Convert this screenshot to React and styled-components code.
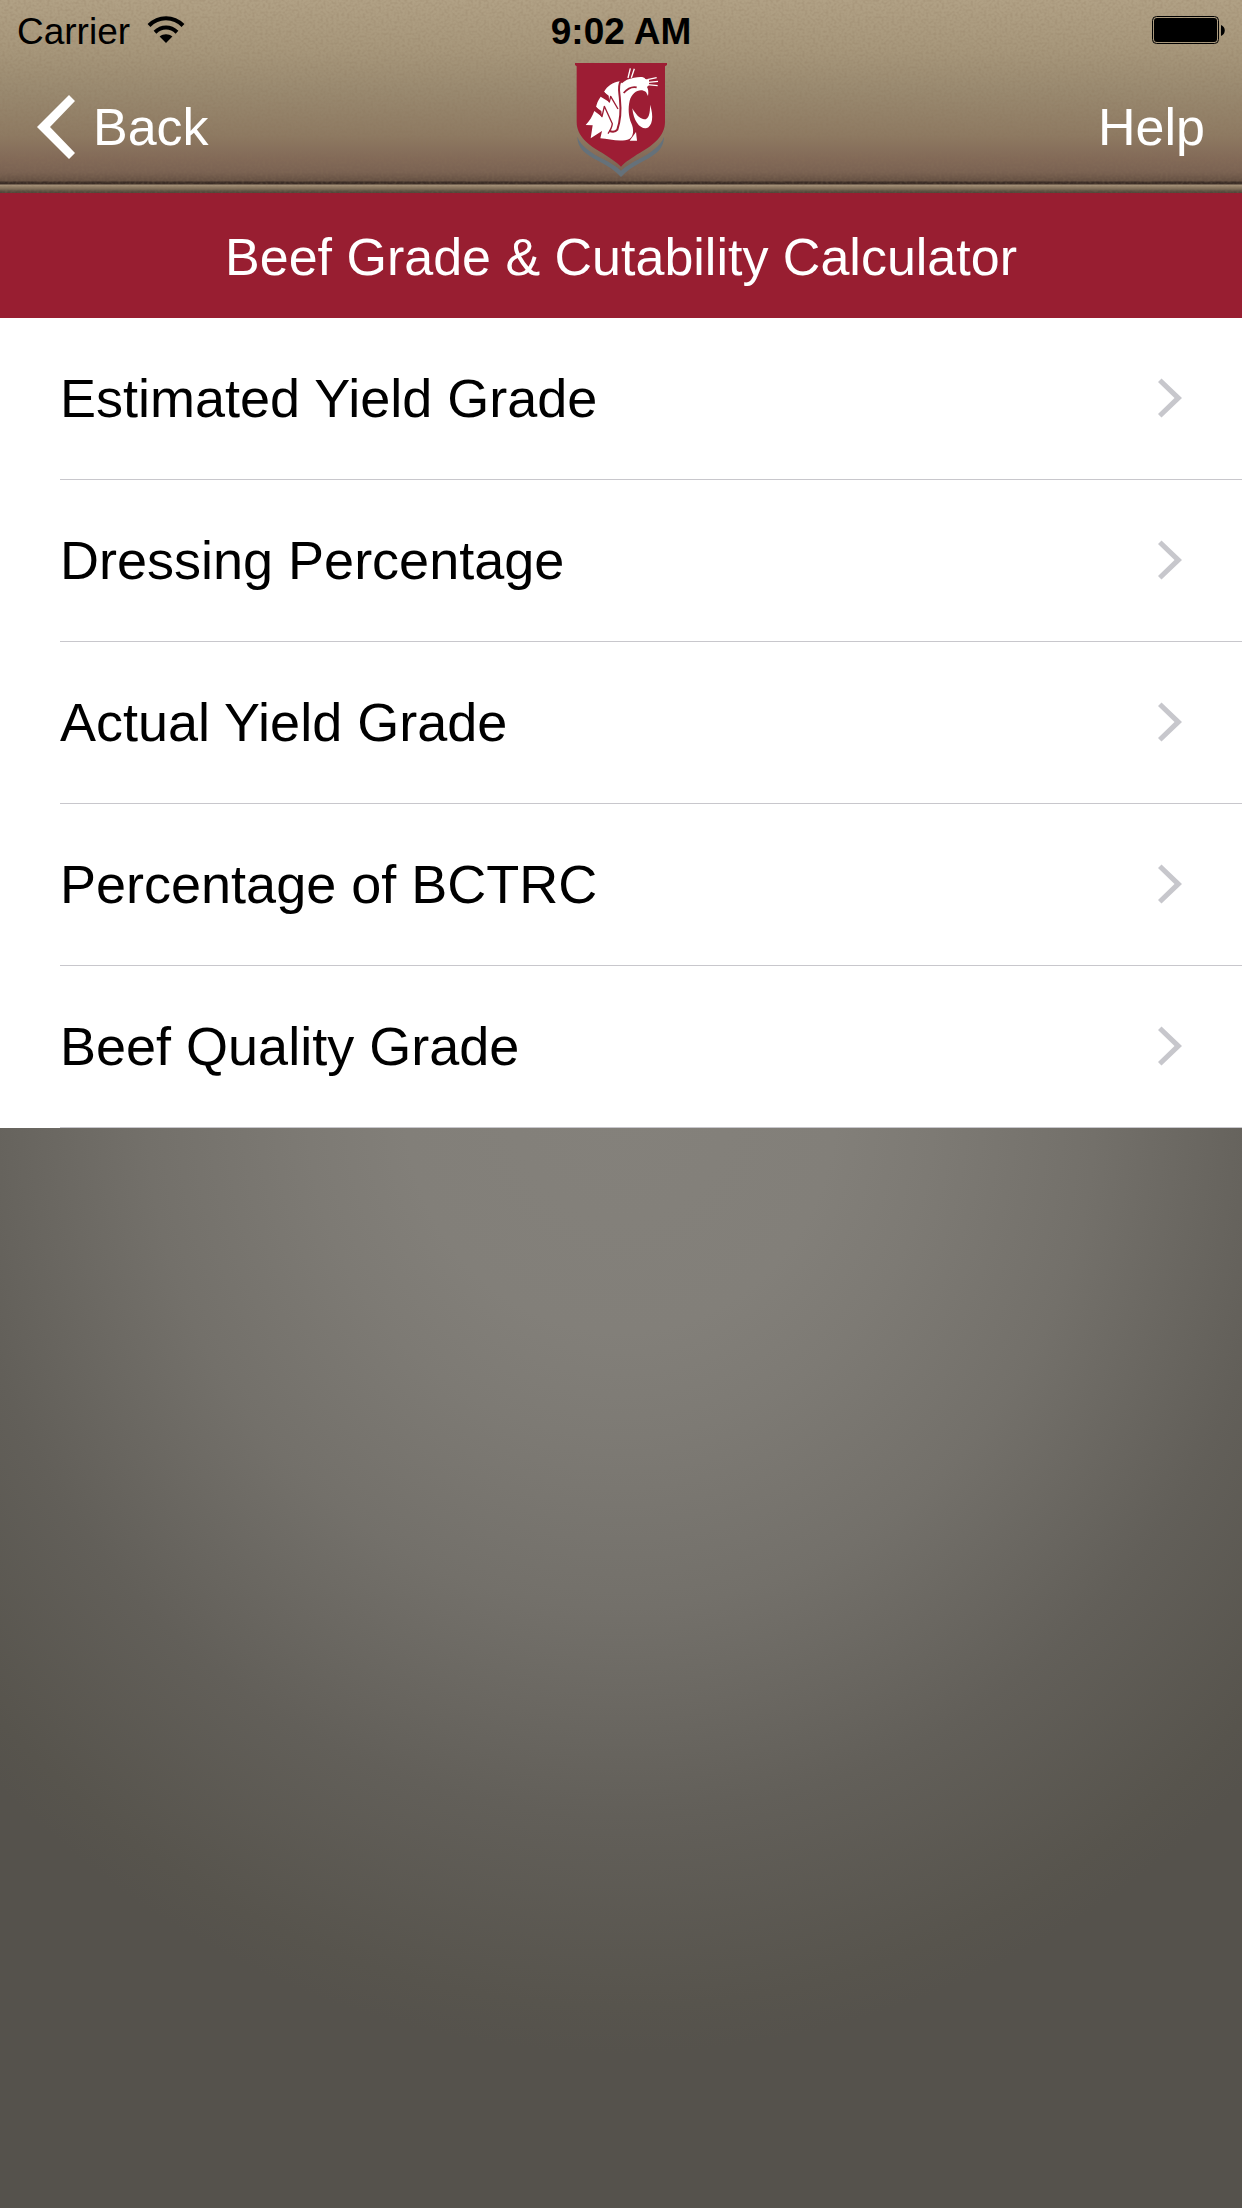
import React from "react";
import styled, { createGlobalStyle } from "styled-components";

const GlobalStyle = createGlobalStyle`
  *, *::before, *::after { box-sizing: border-box; }
  body {
    margin: 0;
    font-family: "Liberation Sans", Arial, Helvetica, sans-serif;
    color: #000;
    background: #55524c;
  }
`;

const Screen = styled.div`
  min-height: 100vh;
  display: flex;
  flex-direction: column;
  background: radial-gradient(
    72% 43% at 50% 50%,
    #84817b 0%,
    #827f79 24%,
    #7d7a74 35%,
    #73706a 53%,
    #625f59 75%,
    #57544d 95%,
    #55524c 100%
  );
`;

const Header = styled.header`
  position: relative;
  isolation: isolate;
  background: linear-gradient(
    #b1a185 0,
    #a7977b 50px,
    #9a8a70 90px,
    #8e7a62 135px,
    #836a58 158px,
    #7a6252 172px,
    #655042 181px,
    #3b2d26 182px,
    #3b2d26 184px,
    #a8947b 185px,
    #917e67 187px,
    #7d6c58 189px,
    #5b5041 191px,
    #4e4437 193px
  );
`;

const Weave = styled.svg`
  position: absolute;
  inset: 0;
  z-index: -1;
  width: 100%;
  height: 100%;
`;

const StatusBar = styled.div`
  display: grid;
  grid-template-columns: 1fr auto 1fr;
  align-items: center;
  height: 60px;
  padding: 0 17px;
  font-size: 37px;
  line-height: 40px;
`;

const StatusGroup = styled.div`
  display: flex;
  align-items: center;
  gap: 17px;
  justify-self: ${(p) => p.$side};
`;

const Carrier = styled.span`
  padding-top: 4px;
`;

const Clock = styled.time`
  padding-top: 4px;
  font-weight: 700;
`;

const NavBar = styled.nav`
  display: grid;
  grid-template-columns: 1fr auto 1fr;
  align-items: center;
  height: 133px;
  padding: 0 37px;
`;

const NavButton = styled.button`
  display: flex;
  align-items: center;
  gap: 18px;
  justify-self: ${(p) => p.$side};
  padding: 0;
  border: 0;
  background: none;
  color: #fff;
  font: inherit;
  font-size: 52px;
  line-height: 60px;
  cursor: pointer;
`;

const Crest = styled.svg`
  display: block;
  align-self: start;
  margin-top: 3px;
`;

const Title = styled.h1`
  margin: 0;
  padding: 34px 24px 31px;
  background: #981e31;
  color: #fff;
  font-size: 52px;
  font-weight: 400;
  line-height: 60px;
  text-align: center;
`;

const Menu = styled.ul`
  margin: 0;
  padding: 0 0 0 60px;
  list-style: none;
  background: #fff;
`;

const MenuItem = styled.li`
  border-bottom: 1px solid #c8c7cc;
`;

const MenuLink = styled.a`
  display: flex;
  align-items: center;
  justify-content: space-between;
  min-height: 161px;
  padding: 0 60px 2px 0;
  color: #000;
  font-size: 54px;
  line-height: 64px;
  text-decoration: none;
`;

const ITEMS = [
  "Estimated Yield Grade",
  "Dressing Percentage",
  "Actual Yield Grade",
  "Percentage of BCTRC",
  "Beef Quality Grade",
];

function Fabric() {
  return (
    <Weave aria-hidden="true">
      <filter id="weave" x="0" y="0" width="100%" height="100%">
        <feTurbulence type="fractalNoise" baseFrequency="0.38 0.42" numOctaves="1" seed="4" />
        <feColorMatrix values="0 0 0 0 0.25  0 0 0 0 0.17  0 0 0 0 0.1  0.6 0 0 0 -0.24" />
      </filter>
      <rect width="100%" height="100%" filter="url(#weave)" />
    </Weave>
  );
}

function WifiIcon() {
  return (
    <svg width="38" height="28" viewBox="0 0 38 28" fill="none" stroke="#000" strokeWidth="4" role="img" aria-label="Wi-Fi">
      <path d="M2 9.500C11.500-.2 26.500-.2 36 9.500" />
      <path d="M8 16.200C14.500 10 23.500 10 30 16.200" />
      <path d="M19 27L12.600 20.600C16.400 17.400 21.600 17.400 25.400 20.600Z" fill="#000" stroke="none" />
    </svg>
  );
}

function BatteryIcon() {
  return (
    <svg width="73" height="28" viewBox="0 0 73 28" role="img" aria-label="Battery full">
      <rect x=".5" y=".5" width="66" height="27" rx="4" fill="none" stroke="#000" />
      <rect x="2" y="2" width="63" height="24" rx="3" />
      <path d="M69 9C74 11 74 18 69 20Z" />
    </svg>
  );
}

function BackIcon() {
  return (
    <svg width="38" height="64" viewBox="0 0 38 64" aria-hidden="true">
      <path d="M32 0L38 6L13 32L38 58L32 64L0 32Z" fill="#fff" />
    </svg>
  );
}

function Disclosure() {
  return (
    <svg width="24" height="40" viewBox="0 0 24 40" aria-hidden="true">
      <path d="M3.500 .5L24 20L3.500 39.500L0 36L16.500 20L0 4Z" fill="#c7c7cc" />
    </svg>
  );
}

function CougarCrest() {
  return (
    <Crest width="92" height="114" viewBox="45 39 276 342" role="img" aria-label="Cougar shield">
      <path
        d="M52 260C62 288 95 310 130 328C150 338 170 350 183 362C196 350 216 338 236 328C270 310 302 288 312 260C312 295 288 314 252 332C224 346 200 362 183 381C166 362 142 346 114 332C78 314 52 295 52 260Z"
        fill="#65717a"
      />
      <path
        d="M45 39H321V45L315 49V215C315 258 280 285 240 308C215 323 195 336 183 350C170 336 150 323 126 308C85 285 50 258 50 215V49L45 45Z"
        fill="#9d1d34"
      />
      <g fill="#fff">
        <path d="M179 94C158 97 142 108 132 126L146 137L148 156L122 140C114 151 110 161 108 172L124 183L126 200L103 183C97 199 89 213 77 225L98 226L92 265L126 243L121 265C148 268 186 277 208 267C222 259 222 238 214 220C205 198 204 174 209 152C217 126 240 113 258 126L264 138C266 126 265 117 261 111L267 105V89L256 87C252 79 238 81 222 83C206 86 194 91 186 100Z" />
        <path d="M217 175C220 213 240 237 258 235C278 230 282 198 270 164C271 190 266 209 252 208C238 205 227 193 217 175Z" />
        <path d="M228 246L209 272H231Z" />
      </g>
      <path
        d="M204 84L211 55M214 83L223 56M262 89L290 83M264 97L294 94M262 104L293 107"
        stroke="#fff"
        strokeWidth="4"
        fill="none"
      />
      <g stroke="#9d1d34" strokeWidth="4" fill="none" strokeLinejoin="round">
        <path d="M182 94C172 110 179 127 180 151C183 178 183 205 172 239C166 247 157 246 148 243" strokeWidth="6" />
        <path d="M132 127L148 156L152 139L174 177M108 172L126 200L133 169L157 221C156 232 151 241 144 251" />
        <path d="M230 112C215 109 202 116 191 129" strokeWidth="5" />
      </g>
    </Crest>
  );
}

export default function App() {
  return (
    <Screen>
      <GlobalStyle />
      <Header>
        <Fabric />
        <StatusBar>
          <StatusGroup $side="start">
            <Carrier>Carrier</Carrier>
            <WifiIcon />
          </StatusGroup>
          <Clock dateTime="09:02">9:02 AM</Clock>
          <StatusGroup $side="end">
            <BatteryIcon />
          </StatusGroup>
        </StatusBar>
        <NavBar>
          <NavButton type="button" $side="start">
            <BackIcon />
            Back
          </NavButton>
          <CougarCrest />
          <NavButton type="button" $side="end">
            Help
          </NavButton>
        </NavBar>
      </Header>
      <main>
        <Title>Beef Grade &amp; Cutability Calculator</Title>
        <Menu>
          {ITEMS.map((label) => (
            <MenuItem key={label}>
              <MenuLink href="#">
                {label}
                <Disclosure />
              </MenuLink>
            </MenuItem>
          ))}
        </Menu>
      </main>
    </Screen>
  );
}
